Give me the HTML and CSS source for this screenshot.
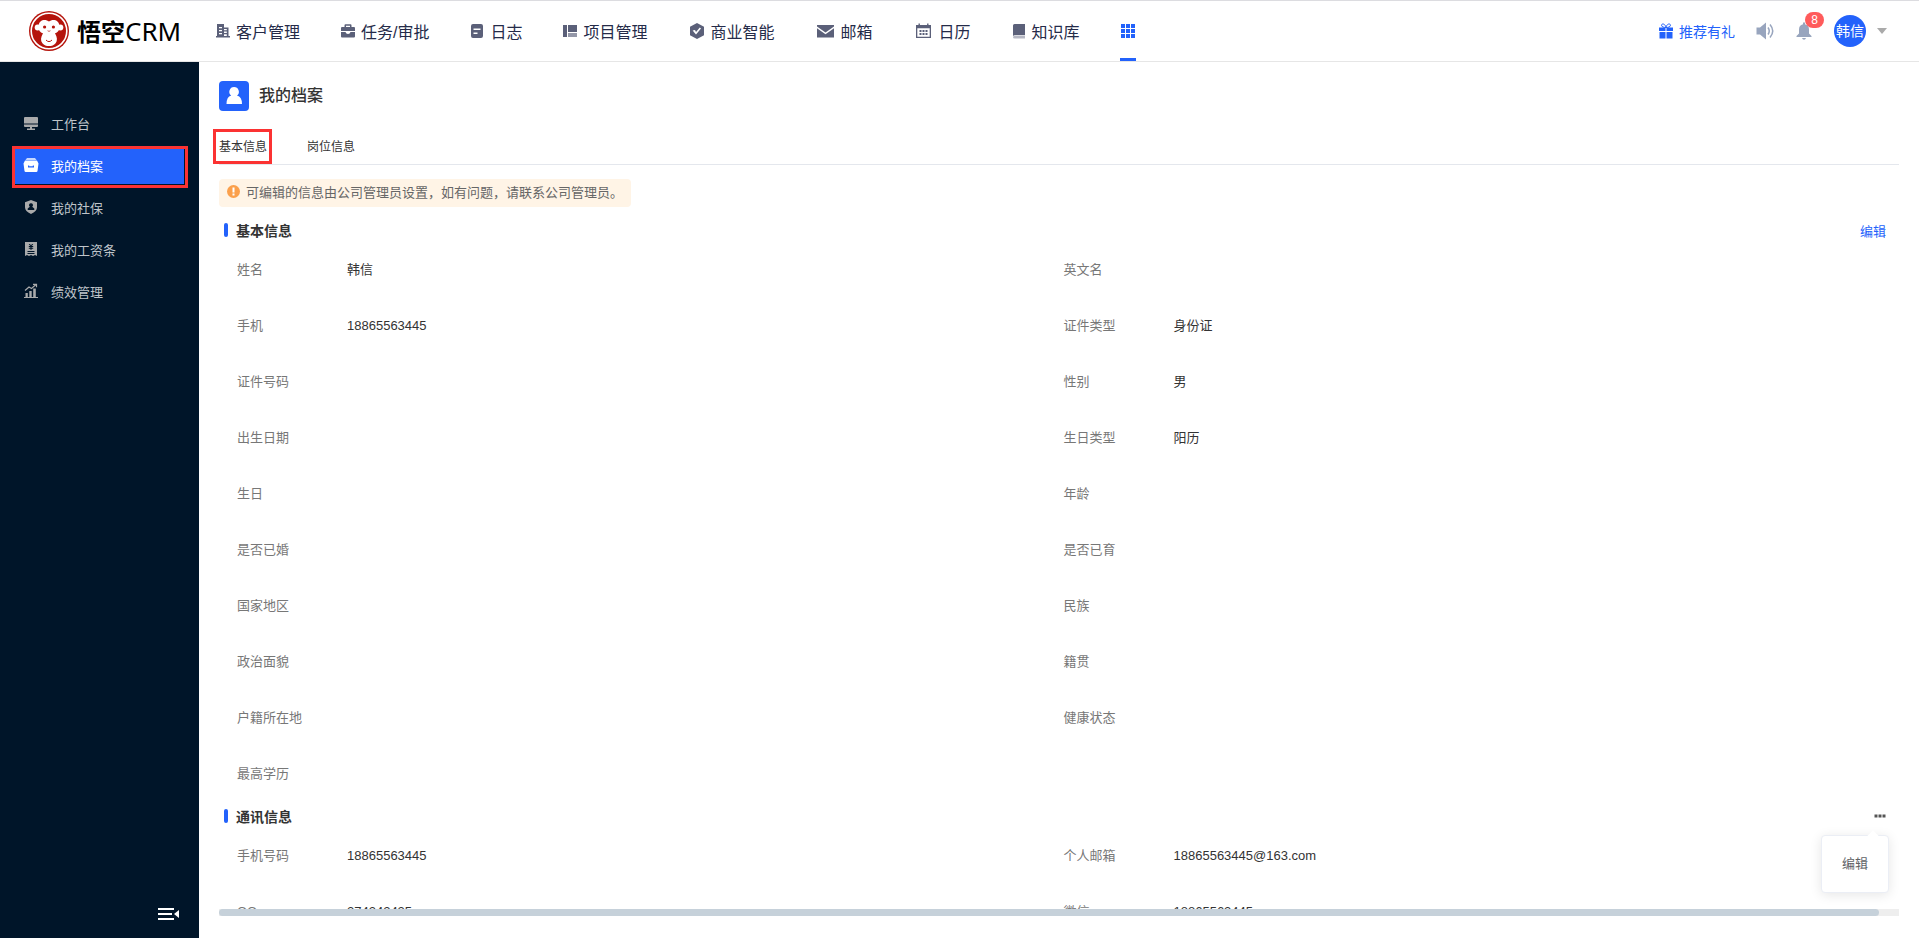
FILE: index.html
```
<!DOCTYPE html>
<html lang="zh-CN">
<head>
    <meta charset="UTF-8">
    <meta name="viewport" content="width=device-width, initial-scale=1.0">
    <title>悟空CRM - 我的档案</title>
    <link rel="stylesheet" href="styles.css">
</head>
<body>
    <header class="header">
        <a class="logo" href="#">
            <svg class="logo-mark" viewBox="0 0 40 40" aria-hidden="true">
                <circle cx="20" cy="20" r="20" fill="#b5140c"/>
                <circle cx="20" cy="20" r="17.8" fill="none" stroke="#fff" stroke-width="1.6"/>
                <circle cx="8.6" cy="16.5" r="2.9" fill="#fff"/>
                <circle cx="31.4" cy="16.5" r="2.9" fill="#fff"/>
                <path d="M20 10.6c-3.2-2.8-10-2.4-10.6 4.6-.3 4.2 2 6.2 4.6 7-2.4 4.2-2.6 7.4-.6 10 1.6 2 4 2.8 6.6 2.8s5-.8 6.6-2.8c2-2.6 1.8-5.8-.6-10 2.6-.8 4.9-2.8 4.6-7C30 8.2 23.2 7.8 20 10.6z" fill="#fff"/>
                <circle cx="15.6" cy="16" r="1.6" fill="#b5140c"/>
                <circle cx="24.4" cy="16" r="1.6" fill="#b5140c"/>
                <path d="M19 19.5l.4 1m1.6-1l-.4 1M17 29q3 3.2 6 0" fill="none" stroke="#b5140c" stroke-width="1"/>
            </svg>
            <span class="logo-cn">悟空</span><span class="logo-en">CRM</span>
        </a>
        <nav class="nav">
            <a href="#">
                <svg class="nav-icon" viewBox="0 0 16 16"><path d="M2 1h7v3.500h4.500V13H15v1.500H1V13h1zM4 4v1.300h3V4zm0 3v1.300h3V7zm0 3v1.300h3V10zm5-4v1.300h2.800V6zm0 2.600v1.300h2.800V8.600zm0 2.600V13h2.800v-1.800z" fill-rule="evenodd"/></svg>客户管理</a>
            <a href="#">
                <svg class="nav-icon" viewBox="0 0 16 16"><path d="M4.500 4V2.300Q4.500 1.300 5.500 1.300h5q1 0 1 1V4H14q1 0 1 1v3H1V5q0-1 1-1zM6 4h4V2.800H6zM1 9h4.500Q6 11 8 11t2.500-2H15v4.500q0 1-1 1H2q-1 0-1-1z" fill-rule="evenodd"/></svg>任务/审批</a>
            <a href="#">
                <svg class="nav-icon" viewBox="0 0 16 16"><path d="M4 1h8q2 0 2 2v10q0 2-2 2H4q-2 0-2-2V3q0-2 2-2zM4.500 5.500V7h7V5.500zm0 4V11h4V9.500z" fill-rule="evenodd"/></svg>日志</a>
            <a href="#">
                <svg class="nav-icon" viewBox="0 0 16 16"><path d="M1 2h4v12H1zM6 2h9v7H6z"/><path d="M6 10h9v4H6z" opacity=".65"/></svg>项目管理</a>
            <a href="#">
                <svg class="nav-icon medium" viewBox="0 0 16 16"><path d="M8 0l7 3.800v8.400L8 16l-7-3.800V3.800zM3.600 7.600L7 11.500l5-6-1.200-1L7 9l-1-2z" fill-rule="evenodd"/></svg>商业智能</a>
            <a href="#">
                <svg class="nav-icon wide" viewBox="0 0 18 16"><path d="M.5 2h17v1.500L9 9.600.5 3.500zM.5 5.200L9 11.300l8.500-6.100V14.500H.5z"/></svg>邮箱</a>
            <a href="#">
                <svg class="nav-icon wide" viewBox="0 0 16 16"><path d="M3 .5h1.400V2h7.200V.5H13V2h2.500v13H.5V2H3zM1.800 5.200v8.500h12.400V5.200z" fill-rule="evenodd"/><path d="M4 7h2v2H4zm3 0h2v2H7zm3 0h2v2h-2zM4 10h2v2H4zm3 0h2v2H7zm3 0h2v2h-2z"/></svg>日历</a>
            <a href="#">
                <svg class="nav-icon" viewBox="0 0 16 16"><path d="M3.500 1H14v11H4.500Q3 12 2 13V2.500Q2 1 3.500 1z"/><path d="M2 14q.5-1.500 2-1.500h10V15.500H3.500Q2 15.500 2 14z" opacity=".45"/></svg>知识库</a>
            <a class="active" href="#" aria-label="更多应用">
                <svg class="nav-icon" viewBox="0 0 16 16"><path d="M1 1h4v4H1zm5 0h4v4H6zm5 0h4v4h-4zM1 6h4v4H1zm5 0h4v4H6zm5 0h4v4h-4zM1 11h4v4H1zm5 0h4v4H6zm5 0h4v4h-4z"/></svg>
            </a>
        </nav>
        <div class="header-right">
            <a class="recommend" href="#">
                <svg width="16" height="16" viewBox="0 0 16 16"><path d="M1 4.500h6.500V8H1zm7.500 0H15V8H8.500zM1.500 9h6v6.500h-6zm7 0h6v6.500h-6z" fill="#2362fb"/><path d="M8 4.500C6 4.500 3.500 4 3.500 2.200 3.500.5 7 0 8 4.500 9 0 12.500.5 12.500 2.200 12.500 4 10 4.500 8 4.500z" fill="none" stroke="#2362fb"/></svg>推荐有礼</a>
            <button class="icon-btn" aria-label="公告">
                <svg width="18" height="18" viewBox="0 0 18 18"><path d="M.5 5.500H4L10 .5v17L4 12.500H.5z" fill="#98a5be"/><path d="M12 5.500q2.500 3.500 0 7M14 2.500q5.500 6.500 0 13" fill="none" stroke="#98a5be" stroke-width="1.5"/></svg>
            </button>
            <button class="icon-btn" aria-label="消息">
                <svg width="18" height="18" viewBox="0 0 18 18"><path d="M8 .5h2v1.700q4 .8 4 5.300v4l2.500 2.500v1h-15v-1L4 11.500v-4q0-4.500 4-5.300zM7 16h4q-.5 1.700-2 1.700T7 16z" fill="#98a5be"/></svg>
                <span class="badge">8</span>
            </button>
            <button class="user">
                <span class="avatar">韩信</span>
                <svg width="10" height="6" viewBox="0 0 10 6"><path d="M0 0h10L5 6z" fill="#aaa"/></svg>
            </button>
        </div>
    </header>

    <div class="layout">
        <aside class="sidebar">
            <nav class="menu">
                <a href="#"><svg viewBox="0 0 16 16"><path d="M2 2h12q1 0 1 1v5.500H1V3q0-1 1-1zM1 9.500h14V11q0 1-1 1H2q-1 0-1-1zM7 12h2v1.500h3V15H4v-1.500h3z"/></svg>工作台</a>
                <a class="active" href="#"><svg viewBox="0 0 16 16"><path d="M4 1h8l1.500 2h-11z" opacity=".75"/><path d="M2 3.500h12l1.500 3L14.500 14q-.2 1-1.200 1H2.700q-1 0-1.200-1L.5 6.500zM5 8.500v2h6v-2H9.800v.8H6.200v-.8z" fill-rule="evenodd"/></svg>我的档案</a>
                <a href="#"><svg viewBox="0 0 16 16"><path d="M8 1l6 2.300v5Q14 12.500 8 15 2 12.500 2 8.300v-5zm0 3.200a2 2 0 0 0-1.200 3.600L4.700 9.500V11h6.600V9.500L9.200 7.800A2 2 0 0 0 8 4.200z" fill-rule="evenodd"/></svg>我的社保</a>
                <a href="#"><svg viewBox="0 0 16 16"><path d="M2 1h12v14l-2-1-2 1-2-1-2 1-2-1-2 1zM5.700 3L7.300 5H5.800v1h1.600v.7H5.800v1h1.600v1h1.200v-1h1.600v-1H8.600V6h1.600V5H8.700l1.600-2H9L8 4.500 7 3zM4.500 10v1h7v-1zm0 2v1h7v-1z" fill-rule="evenodd"/></svg>我的工资条</a>
                <a href="#"><svg viewBox="0 0 16 16"><path d="M2.500 10h2.300v4H2.500zM6.300 8h2.400v6H6.300zM10.200 5.500h2.600V14h-2.600zM1 14h14v1H1z"/><path d="M2 7.500L6 4l2.500 1.500L13 1.500M10 1.300h3.500v3" fill="none" stroke="#a9aaab" stroke-width="1.2"/></svg>绩效管理</a>
            </nav>
            <button class="collapse" aria-label="收起菜单">
                <svg width="22" height="12" viewBox="0 0 22 12"><path d="M0 0h16v2H0zM0 5h14v2H0zM0 10h16v2H0zM21 2v8l-5-4z" fill="#fff"/></svg>
            </button>
        </aside>

        <main class="main">
            <div class="page-title">
                <svg width="30" height="30" viewBox="0 0 30 30" aria-hidden="true"><rect width="30" height="30" rx="4" fill="#2362fb"/><path d="M15 6a4.800 4.800 0 0 1 3 8.600q5 1.500 5 8.400H7.500q0-6.900 4.700-8.400A4.800 4.800 0 0 1 15 6z" fill="#fff"/></svg>
                <h1>我的档案</h1>
            </div>
            <div class="tabs" role="tablist">
                <button class="tab active" role="tab" aria-selected="true">基本信息</button>
                <button class="tab" role="tab" aria-selected="false">岗位信息</button>
            </div>
            <div class="content">
                <p class="tip">
                    <svg width="13" height="13" viewBox="0 0 13 13" aria-hidden="true"><circle cx="6.5" cy="6.5" r="6.5" fill="#fba04c"/><path d="M5.500 2.500h2v5h-2zM5.500 8.500h2v2h-2z" fill="#fff"/></svg>
                    可编辑的信息由公司管理员设置&#65292;如有问题&#65292;请联系公司管理员。
                </p>

                <section class="section">
                    <div class="section-head">
                        <h2>基本信息</h2>
                        <button class="edit">编辑</button>
                    </div>
                    <dl class="fields">
                        <div class="field"><dt>姓名</dt><dd>韩信</dd></div>
                        <div class="field"><dt>英文名</dt><dd></dd></div>
                        <div class="field"><dt>手机</dt><dd>18865563445</dd></div>
                        <div class="field"><dt>证件类型</dt><dd>身份证</dd></div>
                        <div class="field"><dt>证件号码</dt><dd></dd></div>
                        <div class="field"><dt>性别</dt><dd>男</dd></div>
                        <div class="field"><dt>出生日期</dt><dd></dd></div>
                        <div class="field"><dt>生日类型</dt><dd>阳历</dd></div>
                        <div class="field"><dt>生日</dt><dd></dd></div>
                        <div class="field"><dt>年龄</dt><dd></dd></div>
                        <div class="field"><dt>是否已婚</dt><dd></dd></div>
                        <div class="field"><dt>是否已育</dt><dd></dd></div>
                        <div class="field"><dt>国家地区</dt><dd></dd></div>
                        <div class="field"><dt>民族</dt><dd></dd></div>
                        <div class="field"><dt>政治面貌</dt><dd></dd></div>
                        <div class="field"><dt>籍贯</dt><dd></dd></div>
                        <div class="field"><dt>户籍所在地</dt><dd></dd></div>
                        <div class="field"><dt>健康状态</dt><dd></dd></div>
                        <div class="field"><dt>最高学历</dt><dd></dd></div>
                    </dl>
                </section>

                <section class="section">
                    <div class="section-head">
                        <h2>通讯信息</h2>
                        <button class="more" aria-label="更多">
                            <svg width="12" height="4" viewBox="0 0 12 4"><path d="M.5.5h3v3h-3zm4 0h3v3h-3zm4 0h3v3h-3z" fill="#555"/></svg>
                        </button>
                        <div class="popover"><button>编辑</button></div>
                    </div>
                    <dl class="fields">
                        <div class="field"><dt>手机号码</dt><dd>18865563445</dd></div>
                        <div class="field"><dt>个人邮箱</dt><dd>18865563445@163.com</dd></div>
                        <div class="field"><dt>QQ</dt><dd>274242425</dd></div>
                        <div class="field"><dt>微信</dt><dd>18865563445</dd></div>
                    </dl>
                </section>
            </div>
            <div class="scrollbar"><div class="scrollbar-thumb"></div></div>
        </main>
    </div>
</body>
</html>
```
FILE: styles.css
```
* {
    box-sizing: border-box;
}
body {
    margin: 0;
    height: 100vh;
    display: flex;
    flex-direction: column;
    overflow: hidden;
    font-family: "Liberation Sans", "Noto Sans CJK SC", sans-serif;
    font-size: 13px;
    color: #333;
    background-color: #fff;
}
h1, h2, p, dl, dd {
    margin: 0;
}
a {
    color: inherit;
    text-decoration: none;
}
button {
    padding: 0;
    border: none;
    background: none;
    font: inherit;
    color: inherit;
    cursor: pointer;
}
svg {
    flex: none;
}

/* header */
.header {
    display: flex;
    flex: none;
    height: 62px;
    border-top: 1px solid #dcdce0;
    border-bottom: 1px solid #e6e6e6;
}
.logo {
    display: flex;
    align-items: center;
    width: 215px;
    padding-left: 29px;
    color: #000;
}
.logo-mark {
    width: 40px;
    height: 40px;
    margin-right: 8px;
}
.logo-cn {
    font-family: "Noto Sans CJK SC", sans-serif;
    font-size: 24px;
    font-weight: bold;
    line-height: 40px;
}
.logo-en {
    font-family: "Noto Sans", sans-serif;
    font-size: 26px;
    line-height: 40px;
}
.nav {
    display: flex;
    gap: 40px;
    font-size: 16px;
    color: #252b49;
}
.nav a {
    display: flex;
    align-items: center;
    gap: 5px;
    padding-bottom: 1px;
    white-space: nowrap;
}
.nav .active {
    border-bottom: 3px solid #2362fb;
    padding: 3px 0 0;
}
.nav-icon {
    width: 16px;
    height: 16px;
    fill: #5b6079;
}
.nav-icon.medium {
    width: 18px;
}
.nav-icon.wide {
    width: 21px;
}
.nav .active .nav-icon {
    fill: #2362fb;
}
.header-right {
    display: flex;
    align-items: center;
    margin-left: auto;
    padding-right: 32px;
}
.recommend {
    display: flex;
    align-items: center;
    gap: 5px;
    padding-bottom: 1px;
    font-size: 14px;
    color: #2362fb;
}
.icon-btn {
    position: relative;
    display: flex;
    margin-left: 21px;
}
.badge {
    position: absolute;
    top: -10px;
    left: 10px;
    width: 19px;
    height: 16px;
    border-radius: 8px;
    background-color: #ff5b5b;
    color: #fff;
    font-size: 12px;
    line-height: 16px;
    text-align: center;
}
.user {
    display: flex;
    align-items: center;
    gap: 11px;
    margin-left: 21px;
}
.avatar {
    width: 32px;
    height: 32px;
    border-radius: 50%;
    background-color: #2362fb;
    color: #fff;
    font-size: 14px;
    line-height: 32px;
    text-align: center;
    white-space: nowrap;
}

/* sidebar */
.layout {
    display: flex;
    flex: 1;
    min-height: 0;
}
.sidebar {
    display: flex;
    flex-direction: column;
    justify-content: space-between;
    flex: none;
    width: 199px;
    padding: 42px 11px 18px 12px;
    background-color: #001529;
}
.menu a {
    display: flex;
    align-items: center;
    gap: 12px;
    height: 42px;
    padding: 0 0 4px 8px;
    border: 3px solid transparent;
    color: #bfc4c9;
}
.menu svg {
    width: 16px;
    height: 16px;
    fill: #a9aaab;
}
.menu .active {
    border-color: #fb3232;
    background-color: #2362fb;
    box-shadow: inset -1px -1px #001529;
    color: #fff;
}
.menu .active svg {
    fill: #fff;
}
.collapse {
    display: flex;
    align-self: flex-end;
    margin-right: 8px;
}

/* main */
.main {
    display: flex;
    flex: 1;
    flex-direction: column;
    min-width: 0;
    padding: 19px 20px 22px;
}
.page-title {
    display: flex;
    align-items: center;
    gap: 10px;
    height: 30px;
}
.page-title h1 {
    padding-bottom: 4px;
    font-size: 16px;
    font-weight: 500;
}
.tabs {
    display: flex;
    gap: 29px;
    flex: none;
    margin-top: 18px;
    border-bottom: 1px solid #e4e7ed;
}
.tab {
    height: 35px;
    padding: 0 2px 3px 3px;
    border: 3px solid transparent;
    font-size: 12px;
}
.tab.active {
    margin-left: -6px;
    border-color: #fb3232;
}
.content {
    flex: 1;
    min-height: 0;
    padding-top: 14px;
    overflow: hidden;
}
.tip {
    display: flex;
    align-items: center;
    gap: 6px;
    width: fit-content;
    height: 28px;
    padding: 0 8px 3px;
    border-radius: 4px;
    background-color: #fff4e6;
    color: #666;
}
.section {
    margin-bottom: 2px;
    padding: 0 9px 0 5px;
}
.tip + .section {
    margin-top: 11px;
}
.section-head {
    position: relative;
    display: flex;
    align-items: center;
    justify-content: space-between;
    height: 24px;
    padding-right: 4px;
}
.section-head h2 {
    display: flex;
    align-items: center;
    gap: 8px;
    padding-bottom: 1px;
    font-size: 14px;
}
.section-head h2::before {
    content: "";
    width: 4px;
    height: 14px;
    border-radius: 2px;
    background-color: #2362fb;
}
.edit {
    color: #2362fb;
}
.more {
    display: flex;
}
.popover {
    position: absolute;
    top: 31px;
    right: 1px;
    width: 68px;
    height: 58px;
    border: 1px solid #ebeef5;
    border-radius: 4px;
    background-color: #fff;
    box-shadow: 0 2px 12px rgba(0,0,0,0.1);
    color: #606266;
}
.popover::before {
    content: "";
    position: absolute;
    top: -4px;
    right: 11px;
    width: 8px;
    height: 8px;
    background-color: #fff;
    transform: rotate(45deg);
}
.popover button {
    width: 100%;
    height: 100%;
    padding-bottom: 3px;
}
.fields {
    display: grid;
    grid-template-columns: 1fr 1fr;
    padding-left: 13px;
}
.field {
    display: flex;
    height: 56px;
    padding-top: 18px;
    line-height: 20px;
}
.field dt {
    width: 110px;
    color: #777;
}
.scrollbar {
    flex: none;
    height: 7px;
    background-color: #eee;
}
.scrollbar-thumb {
    width: 98.8%;
    height: 7px;
    border-radius: 4px;
    background-color: #c6d1da;
}
```
